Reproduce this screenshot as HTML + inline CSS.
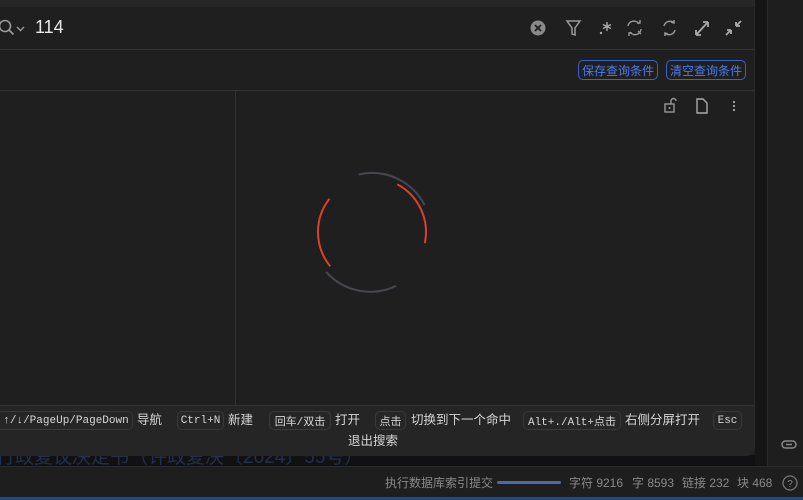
<!DOCTYPE html>
<html><head><meta charset="utf-8"><style>
*{margin:0;padding:0;box-sizing:border-box}
body{width:803px;height:500px;background:#1e1e1e;position:relative;overflow:hidden;font-family:"Liberation Sans","Noto Sans CJK SC",sans-serif;color:#ccc}
.a{position:absolute}
.kbd{position:absolute;top:411px;height:19px;border:1px solid #3a3a3a;border-radius:5px;background:#262626;font-family:"Liberation Mono","Noto Sans CJK SC",monospace;font-size:11px;padding:0 3px;color:#d6d6d6;white-space:nowrap;display:flex;align-items:center;justify-content:center}
.lab{position:absolute;top:411px;font-size:12.5px;line-height:18px;color:#d6d6d6;white-space:nowrap}
.btn{position:absolute;top:60px;height:20px;border:1px solid #3b63c4;border-radius:5px;color:#4a7cf0;font-size:12px;padding:0 3px;white-space:nowrap;display:flex;align-items:center;justify-content:center}
.st{position:absolute;top:475px;font-size:12px;color:#8a8a8a;white-space:nowrap;line-height:16px}
</style></head><body>
<div class="a" style="left:755px;top:0;width:13px;height:466px;background:#151515"></div>
<div class="a" style="left:767px;top:0;width:1px;height:466px;background:#2a2a2a"></div>
<div class="a" style="left:0;top:455px;width:755px;height:11px;background:#111114;overflow:hidden"><div style="position:absolute;left:-4px;top:-13px;font-size:19px;color:#22304a;white-space:nowrap">行政复议决定书（许政复决〔2024〕55号）</div></div>
<div class="a" style="left:0;top:466px;width:803px;height:1px;background:#2a2a2a"></div>
<div class="a" style="left:0;top:497px;width:803px;height:3px;background:#1d4a8a"></div>
<div class="a" style="left:0;top:0;width:755px;height:456px;background:#1f1f1f;border-radius:0 0 10px 0;overflow:hidden;border-right:1px solid #2c2c2c">
<div class="a" style="left:0;top:0;width:755px;height:7px;background:#262626"></div>
<div class="a" style="left:0;top:49px;width:755px;height:1px;background:#333"></div>
<div class="a" style="left:0;top:90px;width:755px;height:1px;background:#333"></div>
<div class="a" style="left:235px;top:91px;width:1px;height:314px;background:#333"></div>
<div class="a" style="left:0;top:405px;width:755px;height:51px;background:#252525;border-top:1px solid #333"></div>
</div>
<svg class="a" style="left:0;top:18px" width="30" height="20"><circle cx="5" cy="8" r="5.5" stroke="#999" stroke-width="1.6" fill="none"/><path d="M9 12l4.5 4.5" stroke="#999" stroke-width="1.8"/><path d="M17 9l3.5 3.5 3.5-3.5" stroke="#999" stroke-width="1.4" fill="none"/></svg>
<div class="a" style="left:35px;top:16px;font-size:18px;color:#e8e8e8;line-height:22px">114</div>
<svg class="a" style="left:528px;top:18px" width="225" height="20">
<circle cx="10" cy="10" r="7.5" fill="#8a8a8a"/><path d="M7 7l6 6M13 7l-6 6" stroke="#1f1f1f" stroke-width="1.8"/>
<path d="M39 3h13l-5 7v7l-3-1v-6z" stroke="#9a9a9a" stroke-width="1.5" fill="none"/>
<circle cx="73" cy="15" r="1.2" fill="#aaa"/><path d="M79 4v9M75 6.5l8 4M75 10.5l8-4" stroke="#aaa" stroke-width="1.4"/>
<path d="M100 8a6 6 0 0 1 11-2M113 11a6 6 0 0 1-11 3M109 5h3V2M104 15h-3v3M110 13l3 3" stroke="#999" stroke-width="1.4" fill="none"/>
<path d="M136 8a6 6 0 0 1 10-3M147 12a6 6 0 0 1-10 3M143 4l3 1 0-3M140 16l-3-1 0 3" stroke="#999" stroke-width="1.5" fill="none"/>
<path d="M168 17l12-13M168 17v-5M168 17h5M180 4h-5M180 4v5" stroke="#aaa" stroke-width="1.8" fill="none"/>
<path d="M198 17l5-5M203 12h-4M203 12v4M213 3l-5 5M208 8h4M208 8v-4" stroke="#aaa" stroke-width="1.8" fill="none"/>
</svg>
<div class="btn" style="left:578px;width:80px">保存查询条件</div>
<div class="btn" style="left:666px;width:80px">清空查询条件</div>
<svg class="a" style="left:662px;top:97px" width="82" height="18">
<rect x="3" y="7" width="9" height="8" stroke="#999" stroke-width="1.4" fill="none"/><path d="M9 7V4a2.5 2.5 0 0 1 5 0" stroke="#999" stroke-width="1.4" fill="none"/><circle cx="7.5" cy="11" r="1" fill="#999"/>
<path d="M35 2h6l4 4v10h-10z" stroke="#aaa" stroke-width="1.4" fill="none"/>
<circle cx="72" cy="5" r="1.1" fill="#aaa"/><circle cx="72" cy="9" r="1.1" fill="#aaa"/><circle cx="72" cy="13" r="1.1" fill="#aaa"/>
</svg>
<svg class="a" style="left:300px;top:160px" width="145" height="145">
<g transform="translate(72,72)" fill="none" stroke-width="2">
<path d="M-13.3-57.5A59 59 0 0 1 52.6-26.8" stroke="#45484e"/>
<path d="M-45.9 39.8A59 59 0 0 0 24 53.9" stroke="#45484e"/>
<path d="M25.4-47.6A54 54 0 0 1 52.8 11.2" stroke="#d9402e"/>
<path d="M-42.5-33.3A54 54 0 0 0 -41.8 34.2" stroke="#d9402e"/>
</g></svg>
<div class="kbd" style="left:0;width:133px;border-left:none;border-radius:0 5px 5px 0">↑/↓/PageUp/PageDown</div>
<div class="lab" style="left:137px">导航</div>
<div class="kbd" style="left:177px;width:47px">Ctrl+N</div>
<div class="lab" style="left:228px">新建</div>
<div class="kbd" style="left:269px;width:62px">回车/双击</div>
<div class="lab" style="left:335px">打开</div>
<div class="kbd" style="left:375px;width:31px">点击</div>
<div class="lab" style="left:411px">切换到下一个命中</div>
<div class="kbd" style="left:523px;width:98px">Alt+./Alt+点击</div>
<div class="lab" style="left:625px">右侧分屏打开</div>
<div class="kbd" style="left:713px;width:29px">Esc</div>
<div class="lab" style="left:348px;top:432px">退出搜索</div>
<svg class="a" style="left:780px;top:438px" width="18" height="14"><rect x="2" y="3" width="14" height="7" rx="3.5" stroke="#888" stroke-width="1.5" fill="none"/><path d="M6 6.5h6" stroke="#888" stroke-width="1.5"/></svg>
<div class="st" style="left:385px">执行数据库索引提交</div>
<div class="a" style="left:497px;top:481px;width:64px;height:3px;background:#4d6aa8;border-radius:2px"></div>
<div class="st" style="left:569px">字符 9216</div>
<div class="st" style="left:632px">字 8593</div>
<div class="st" style="left:682px">链接 232</div>
<div class="st" style="left:737px">块 468</div>
<svg class="a" style="left:782px;top:474px" width="18" height="18"><circle cx="8" cy="9" r="7" stroke="#777" stroke-width="1.3" fill="none"/><text x="8" y="13" font-size="10" fill="#888" text-anchor="middle" font-family="Liberation Sans">?</text></svg>
</body></html>
